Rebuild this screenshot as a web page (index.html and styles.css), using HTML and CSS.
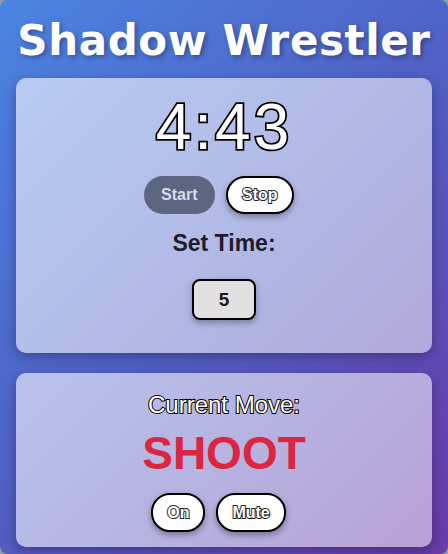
FILE: index.html
```html
<!DOCTYPE html>
<html>
<head>
<meta charset="utf-8">
<link rel="stylesheet" href="styles.css">
</head>
<body>
<div class="app">
  <h1 class="title">Shadow Wrestler</h1>
  <section class="card timer-card">
    <div class="timer">4:43</div>
    <div class="btn-row">
      <button class="btn btn-start">Start</button>
      <button class="btn btn-outline">Stop</button>
    </div>
    <div class="set-label">Set Time:</div>
    <div class="time-input">5</div>
  </section>
  <section class="card move-card">
    <div class="move-label">Current Move:</div>
    <div class="move">SHOOT</div>
    <div class="btn-row move-row">
      <button class="btn btn-outline">On</button>
      <button class="btn btn-outline">Mute</button>
    </div>
  </section>
</div>
</body>
</html>
```
FILE: styles.css
```css
html {
  background: #8c9ca4;
}
body {
  margin: 0;
  font-family: "Liberation Sans", Arial, sans-serif;
}
.app {
  box-sizing: border-box;
  height: 554px;
  padding: 0 16px;
  border-radius: 8px;
  overflow: hidden;
  background: linear-gradient(135deg, #4b84e2 0%, #5060c4 50%, #6b3aa6 100%);
  display: flex;
  flex-direction: column;
}
.title {
  margin: 16px 0 12px;
  height: 50px;
  line-height: 50px;
  text-align: center;
  font-family: "DejaVu Sans", sans-serif;
  font-weight: bold;
  font-size: 42px;
  letter-spacing: 0.6px;
  color: #fff;
  text-shadow: 2px 2px 5px rgba(0, 0, 0, 0.35);
}
.card {
  background: linear-gradient(135deg, rgba(255,255,255,0.6), rgba(255,255,255,0.52));
  border-radius: 10px;
  box-shadow: 0 4px 12px rgba(20, 10, 60, 0.35);
  display: flex;
  flex-direction: column;
  align-items: center;
}
.timer-card {
  height: 275px;
  box-sizing: border-box;
  padding-top: 17px;
}
.move-card {
  margin-top: 20px;
  height: 174px;
  box-sizing: border-box;
  padding-top: 21px;
}
.timer {
  font-size: 64px;
  line-height: 64px;
  letter-spacing: 3px;
  color: #fff;
  -webkit-text-stroke: 3.5px #000;
  paint-order: stroke fill;
}
.btn-row {
  display: flex;
  margin-top: 17px;
}
.btn {
  height: 38px;
  margin-right: 11px;
  padding: 0 14px;
  border-radius: 19px;
  font-family: "Liberation Sans", Arial, sans-serif;
  font-size: 16px;
  font-weight: bold;
  cursor: pointer;
}
.btn-start {
  background: #5b6781;
  color: #d4dbea;
  border: none;
  padding: 0 17.5px;
}
.btn-outline {
  background: #fff;
  border: 2px solid #000;
  color: #fff;
  -webkit-text-stroke: 2px #222;
  paint-order: stroke fill;
  box-shadow: 0 3px 6px rgba(0, 0, 0, 0.35);
}
.set-label {
  margin-top: 18px;
  font-size: 23px;
  line-height: 23px;
  font-weight: bold;
  color: #1c1c2c;
}
.time-input {
  margin-top: 24px;
  width: 64px;
  height: 41px;
  box-sizing: border-box;
  border: 2px solid #000;
  border-radius: 8px;
  background: #e2dfe0;
  display: flex;
  align-items: center;
  justify-content: center;
  font-size: 19px;
  font-weight: bold;
  color: #1a1a1a;
  box-shadow: 0 3px 6px rgba(0, 0, 0, 0.3);
}
.move-label {
  margin-top: -1px;
  font-size: 24px;
  line-height: 24px;
  color: #fff;
  -webkit-text-stroke: 2px #000;
  paint-order: stroke fill;
}
.move {
  margin-top: 13px;
  font-size: 46px;
  line-height: 46px;
  font-weight: bold;
  color: #dc2541;
}
.move-row {
  margin-top: 17px;
}
.move-row .btn {
  height: 39px;
}
```
